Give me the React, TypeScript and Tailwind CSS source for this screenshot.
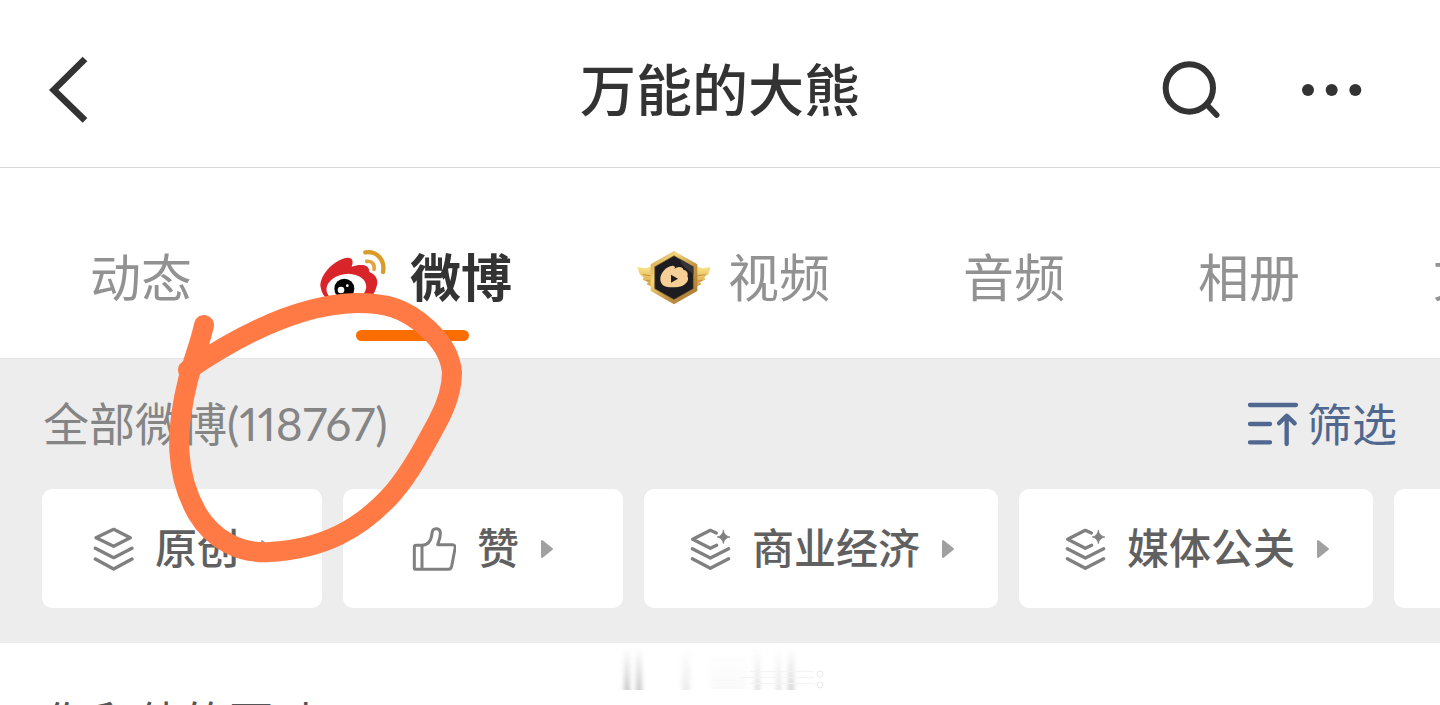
import { useState } from 'react';
import { cx } from 'class-variance-authority';

const WeiboLogo = () => (
  <svg viewBox="51 54 207 180" className="h-[60px] w-[69px] shrink-0" aria-hidden="true">
    <path
      d="M62 172C56 142 96 90 142 83C158 82 161 94 155 110C180 102 209 102 208 126C226 132 238 150 229 172C218 212 180 228 136 228C96 226 66 204 62 172Z"
      fill="#d9252a"
    />
    <ellipse cx="139" cy="174" rx="60" ry="42" transform="rotate(-8 139 174)" fill="#fff" />
    <circle cx="133" cy="176" r="30" fill="#050505" />
    <circle cx="123" cy="180" r="10" fill="#fff" />
    <circle cx="142" cy="167" r="4" fill="#fff" />
    <g fill="none" strokeLinecap="round" strokeWidth="13">
      <path d="M196 67C232 62 256 92 249 126" stroke="#d99c2b" />
      <path d="M200 94C216 92 225 103 222 118" stroke="#e3a33c" strokeWidth="11" />
    </g>
  </svg>
);

const VideoBadge = () => (
  <svg viewBox="51 54 222 180" className="h-[60px] w-[74px] shrink-0" aria-hidden="true">
    <defs>
      <linearGradient id="badge-gold" x1="0" y1="0" x2="1" y2="1">
        <stop offset="0" stopColor="#c8963e" />
        <stop offset="0.3" stopColor="#f3d57e" />
        <stop offset="0.6" stopColor="#c29343" />
        <stop offset="1" stopColor="#a87832" />
      </linearGradient>
      <linearGradient id="badge-wing" x1="0" y1="0" x2="0" y2="1">
        <stop offset="0" stopColor="#fbe58c" />
        <stop offset="1" stopColor="#d5a043" />
      </linearGradient>
    </defs>
    <path d="M52 111L76 115L98 108V172L80 163L84 157L68 149L71 142L59 133Z" fill="url(#badge-wing)" />
    <path d="M272 111L248 115L226 108V172L244 163L240 157L256 149L253 142L265 133Z" fill="url(#badge-wing)" />
    <path d="M68 134L97 138M78 151L97 154M256 134L227 138M246 151L227 154" stroke="#c7923a" strokeWidth="3" />
    <path d="M162 63L232 103V183L162 223L92 183V103Z" fill="url(#badge-gold)" strokeLinejoin="round" />
    <path d="M162 77L220 110V176L162 209L104 176V110Z" fill="#1d1c20" stroke="#8e682c" strokeWidth="2" />
    <path d="M180 87L220 110V132C204 118 184 112 180 87Z" fill="#38353a" />
    <path
      d="M121 149C120 129 139 108 158 107C166 108 166 113 163 117C171 109 189 108 190 119C203 121 205 133 202 139C211 151 193 171 174 171C142 174 123 170 121 149Z"
      fill="#f5cf96"
    />
    <path d="M153 134V158L174 146Z" fill="#1d1c20" strokeLinejoin="round" />
  </svg>
);

const LayersIcon = () => (
  <svg viewBox="210 439 132 132" className="size-11 shrink-0" fill="none" stroke="#808080" strokeWidth="10" strokeLinecap="round" strokeLinejoin="round" aria-hidden="true">
    <path d="M281 446L331 471L281 497L228 471Z" />
    <path d="M226 503L281 531L336 503" />
    <path d="M226 535L281 565L336 535" />
  </svg>
);

const TopicIcon = () => (
  <svg viewBox="921 139 132 132" className="size-11 shrink-0" fill="none" stroke="#808080" strokeWidth="10" strokeLinecap="round" strokeLinejoin="round" aria-hidden="true">
    <path d="M1009 157L991 149L938 176L991 203L1010 194" />
    <path d="M937 204L991 232L1046 204" />
    <path d="M937 234L991 263L1046 234" />
    <path d="M1030 149Q1033 166 1050 169Q1033 172 1030 189Q1027 172 1011 169Q1027 166 1030 149Z" fill="#808080" stroke="#808080" strokeWidth="2" />
  </svg>
);

const LikeIcon = () => (
  <svg viewBox="98 139 132 132" className="size-11 shrink-0" fill="none" stroke="#808080" strokeWidth="9" strokeLinejoin="round" aria-hidden="true">
    <path d="M128 194C145 193 156 180 158 158C159 140 181 141 183 155C184 170 179 180 175 192H219C226 192 229 197 227 204L217 257C216 263 213 266 207 266H110C107 266 105 264 105 261V199C105 196 107 194 110 194Z" />
    <path d="M128 194V266" />
  </svg>
);

const SortIcon = () => (
  <svg viewBox="81 66 156 135" className="h-[45px] w-[52px] shrink-0" fill="none" stroke="#50678f" strokeWidth="13" strokeLinecap="round" strokeLinejoin="round" aria-hidden="true">
    <path d="M90 75H228M90 132H150M90 187H150" />
    <path d="M200 192V108M177 130L200 107L224 130" />
  </svg>
);

const tabs = [
  { label: '动态' },
  { label: '微博', icon: WeiboLogo, gap: 'gap-6' },
  { label: '视频', icon: VideoBadge, gap: 'gap-[17px]' },
  { label: '音频' },
  { label: '相册' },
  { label: '文章' },
];

const filters = [
  { label: '原创', icon: LayersIcon, width: 'w-[280px]' },
  { label: '赞', icon: LikeIcon, width: 'w-[280px]' },
  { label: '商业经济', icon: TopicIcon, width: 'w-[354px]' },
  { label: '媒体公关', icon: TopicIcon, width: 'w-[354px]' },
];

const Header = () => (
  <header className="grid h-[168px] shrink-0 grid-cols-[1fr_auto_1fr] items-center border-b border-[#d9d9d9] pt-3">
    <button className="ml-[49px] justify-self-start" aria-label="返回">
      <svg viewBox="147 76 120 204" className="h-[68px] w-10" fill="none" stroke="#333" strokeWidth="20">
        <path d="M255 85L161 178L255 269" />
      </svg>
    </button>
    <h1 className="pb-1.5 text-[56px] leading-none font-medium text-[#333]">万能的大熊</h1>
    <div className="mr-[77px] flex gap-20 justify-self-end">
      <button aria-label="搜索">
        <svg viewBox="123 88 180 180" className="size-[60px]" fill="none" stroke="#333">
          <circle cx="208" cy="172" r="71" strokeWidth="18" />
          <path d="M262 224L290 253" strokeWidth="17" strokeLinecap="round" />
        </svg>
      </button>
      <button aria-label="更多">
        <svg viewBox="543 88 186 180" className="h-[60px] w-[62px]" fill="#333">
          <circle cx="564" cy="178" r="18" />
          <circle cx="635" cy="178" r="18" />
          <circle cx="706" cy="178" r="18" />
        </svg>
      </button>
    </div>
  </header>
);

// Hand-drawn marker ring around the post count
const MarkerRing = () => (
  <svg viewBox="160 280 320 300" className="pointer-events-none absolute top-[280px] left-40 h-[300px] w-80" fill="none" stroke="#ff7a45" strokeLinecap="round" strokeLinejoin="round" aria-hidden="true">
    <path
      d="M204 325C200 344 193 360 188 380C175 432 175 474 197 513C213 540 240 554 270 552C322 549 360 530 393 493C410 473 423 449 438 421C446 406 452 390 452 372C450 354 441 341 427 328C405 308 386 303 357 303C300 304 238 336 188 370"
      strokeWidth="20"
    />
  </svg>
);

const Watermark = () => (
  <svg viewBox="0 0 220 52" className="h-[52px] w-[220px]" aria-hidden="true">
    <defs>
      <linearGradient id="fade" x1="0" y1="0" x2="0" y2="1">
        <stop offset="0" stopColor="#999" stopOpacity="0" />
        <stop offset="1" stopColor="#888" stopOpacity="0.45" />
      </linearGradient>
      <filter id="soft" x="-20%" y="-20%" width="140%" height="140%">
        <feGaussianBlur stdDeviation="2 0" />
      </filter>
    </defs>
    <g fill="url(#fade)" filter="url(#soft)">
      <rect x="14" y="4" width="6" height="43" />
      <rect x="26" y="4" width="6" height="43" />
      <rect x="72" y="4" width="8" height="43" opacity="0.35" />
      <rect x="100" y="10" width="36" height="36" opacity="0.1" />
      <rect x="145" y="4" width="5" height="43" opacity="0.6" />
      <rect x="166" y="4" width="5" height="43" opacity="0.5" />
      <rect x="178" y="4" width="6" height="43" opacity="0.8" />
    </g>
    <g fill="none" stroke="#e8e8e8">
      <path d="M140 28.5H204M130 34.5H204M140 40.5H204" stroke="#f4f4f4" />
      <circle cx="210" cy="31" r="3" />
      <circle cx="210" cy="42" r="3" />
    </g>
  </svg>
);

export default function App() {
  const [activeTab, setActiveTab] = useState('微博');

  return (
    <div className="relative flex h-screen flex-col overflow-hidden bg-white font-['Noto_Sans_CJK_SC',sans-serif]">
      <Header />

      <nav className="flex h-[190px] shrink-0 items-center gap-[117px] pt-[30px] pl-[82px]">
        {tabs.map(({ label, icon: Icon, gap }) => (
          <button
            key={label}
            onClick={() => setActiveTab(label)}
            className={cx(
              'relative flex shrink-0 items-center pr-2 text-[51px] leading-none',
              Icon ? gap : 'pl-2',
              activeTab === label ? 'font-bold text-[#333]' : 'text-[#929292]'
            )}
          >
            {Icon && <Icon />}
            <span className="pb-1.5">{label}</span>
            {activeTab === label && (
              <span className="absolute -bottom-[33px] left-[39px] h-[11px] w-[113px] rounded-full bg-[#fa6d00]" />
            )}
          </button>
        ))}
      </nav>

      <section className="shrink-0 border-t border-[#e4e4e4] bg-[#ededed] pb-[35px]">
        <div className="flex h-[130px] items-center justify-between px-[43px]">
          <h2 className="pb-1 text-[46px] leading-none text-[#858585]">
            全部微博<span className="font-[Lato] proportional-nums">(118767)</span>
          </h2>
          <button className="flex items-center gap-2 text-[45px] leading-none text-[#50678f]">
            <SortIcon />
            <span className="pb-1">筛选</span>
          </button>
        </div>

        <div className="flex gap-[21px] pl-[42px]">
          {filters.map(({ label, icon: Icon, width }) => (
            <button
              key={label}
              className={cx(
                'flex h-[119px] shrink-0 items-center justify-center gap-[21px] rounded-[10px] bg-white text-[42px] leading-none font-medium text-[#606060]',
                width
              )}
            >
              <Icon />
              <span className="pb-1.5">{label}</span>
              <svg viewBox="0 0 14 20" className="h-5 w-3.5 shrink-0" fill="#a0a0a0" stroke="#a0a0a0" strokeWidth="2" strokeLinejoin="round" aria-hidden="true">
                <path d="M2 2V18L12 10Z" />
              </svg>
            </button>
          ))}
          <button className="h-[119px] w-[280px] shrink-0 rounded-[10px] bg-white" aria-label="更多分类" />
        </div>
      </section>

      <section className="shrink-0">
        <div className="flex justify-center">
          <Watermark />
        </div>
        <p className="pt-0.5 pl-11 text-[46px] leading-none text-[#555]">你和他的互动</p>
      </section>

      <MarkerRing />
    </div>
  );
}
